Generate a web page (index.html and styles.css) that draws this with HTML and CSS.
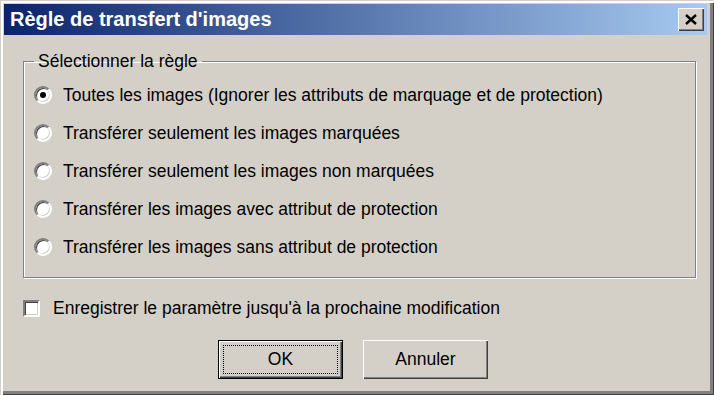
FILE: index.html
```html
<!DOCTYPE html>
<html lang="fr">
<head>
  <meta charset="UTF-8">
  <title>Règle de transfert d'images</title>
  <link rel="stylesheet" href="styles.css">
</head>
<body>
  <div class="window">
    <div class="titlebar">
      <span class="title">Règle de transfert d'images</span>
      <button class="close" aria-label="Fermer">
        <svg width="12" height="11" viewBox="0 0 12 11">
          <path d="M1 1 L11 10 M11 1 L1 10" stroke="#000" stroke-width="2.4" fill="none"/>
        </svg>
      </button>
    </div>

    <div class="content">
      <!-- Choix de la règle -->
      <fieldset class="group">
        <legend>Sélectionner la règle</legend>
        <label class="option"><span class="radio checked"></span>Toutes les images (Ignorer les attributs de marquage et de protection)</label>
        <label class="option"><span class="radio"></span>Transférer seulement les images marquées</label>
        <label class="option"><span class="radio"></span>Transférer seulement les images non marquées</label>
        <label class="option"><span class="radio"></span>Transférer les images avec attribut de protection</label>
        <label class="option"><span class="radio"></span>Transférer les images sans attribut de protection</label>
      </fieldset>

      <label class="check-row"><span class="checkbox"></span>Enregistrer le paramètre jusqu'à la prochaine modification</label>

      <div class="buttons">
        <button class="button default"><span class="focus">OK</span></button>
        <button class="button">Annuler</button>
      </div>
    </div>
  </div>
</body>
</html>
```

FILE: styles.css
```css
body {
  margin: 0;
  background-color: #d4d0c8;
  font-family: "Liberation Sans", Arial, sans-serif;
  font-size: 17.5px;
  color: #000;
}
.window {
  width: 714px;
  height: 395px;
  box-sizing: border-box;
  background-color: #d4d0c8;
  padding: 4px 7px 4px 4px;
  box-shadow: inset 1px 1px 0 #d4d0c8, inset 3px 3px 0 #fff,
              inset -1px -1px 0 #404040, inset -4px -4px 0 #808080;
}
.titlebar {
  height: 31px;
  display: flex;
  align-items: center;
  justify-content: space-between;
  padding: 0 3px 0 6px;
  background: linear-gradient(to right, #0a246a, #a6caf0);
}
.title {
  color: #fff;
  font-weight: bold;
  font-size: 20px;
}
.close {
  width: 26px;
  height: 23px;
  padding: 0;
  border: none;
  background-color: #d4d0c8;
  display: flex;
  align-items: center;
  justify-content: center;
  box-shadow: inset 1px 1px 0 #fff, inset -1px -1px 0 #404040, inset -2px -2px 0 #808080;
}
.content {
  padding: 0 11px 0 19px;
}
.group {
  margin: 16px 0 0 0;
  padding: 4px 0 11px 10px;
  border: 1px solid #808080;
  box-shadow: 1px 1px 0 #fff, inset 1px 1px 0 #fff;
}
legend {
  padding: 0 4px;
  margin-left: 0;
}
.option {
  display: flex;
  align-items: center;
  height: 38px;
}
.radio {
  width: 14px;
  height: 14px;
  border-radius: 50%;
  border: 2px solid;
  border-color: #808080 #fff #fff #808080;
  background-color: #fff;
  box-shadow: inset 1px 1px 0 #404040, inset -1px -1px 0 #d4d0c8;
  margin-right: 11px;
  display: flex;
  align-items: center;
  justify-content: center;
}
.radio.checked::after {
  content: "";
  width: 6px;
  height: 6px;
  border-radius: 50%;
  background-color: #000;
}
.check-row {
  display: flex;
  align-items: center;
  margin-top: 20px;
}
.checkbox {
  width: 13px;
  height: 13px;
  margin-right: 13px;
  border: 2px solid;
  border-color: #808080 #fff #fff #808080;
  background-color: #fff;
  box-shadow: inset 1px 1px 0 #404040, inset -1px -1px 0 #d4d0c8;
}
.buttons {
  display: flex;
  gap: 20px;
  margin-top: 21px;
  padding-left: 195px;
}
.button {
  width: 125px;
  height: 39px;
  font-family: inherit;
  font-size: 17.5px;
  color: #000;
  background-color: #d4d0c8;
  border: none;
  padding: 0;
  box-shadow: inset 1px 1px 0 #fff, inset -1px -1px 0 #404040, inset -2px -2px 0 #808080;
}
.button.default {
  border: 1px solid #000;
  padding: 4px;
}
.focus {
  display: flex;
  align-items: center;
  justify-content: center;
  height: 100%;
  border: 1px dotted #000;
  box-sizing: border-box;
}
```
